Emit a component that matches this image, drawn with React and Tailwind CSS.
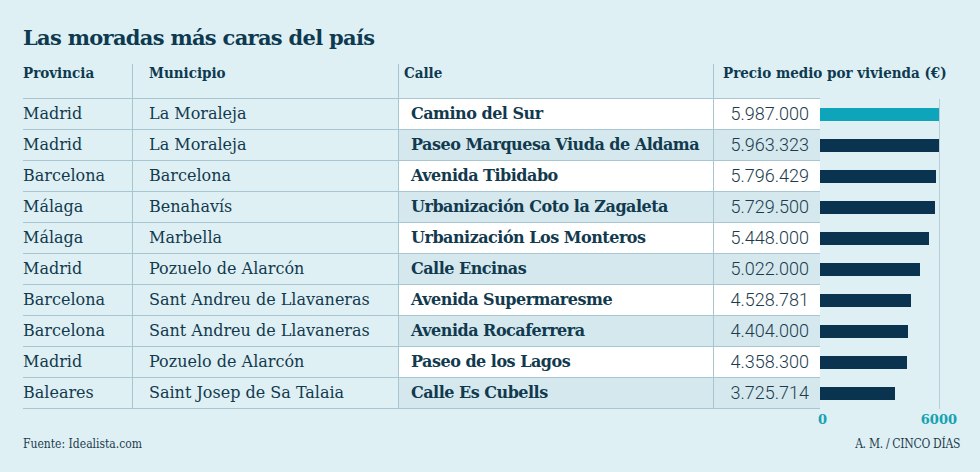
import React from 'react';

const rows = [
    ['Madrid', 'La Moraleja', 'Camino del Sur', '5.987.000', 5987],
    ['Madrid', 'La Moraleja', 'Paseo Marquesa Viuda de Aldama', '5.963.323', 5963],
    ['Barcelona', 'Barcelona', 'Avenida Tibidabo', '5.796.429', 5796],
    ['Málaga', 'Benahavís', 'Urbanización Coto la Zagaleta', '5.729.500', 5729],
    ['Málaga', 'Marbella', 'Urbanización Los Monteros', '5.448.000', 5448],
    ['Madrid', 'Pozuelo de Alarcón', 'Calle Encinas', '5.022.000', 5022],
    ['Barcelona', 'Sant Andreu de Llavaneras', 'Avenida Supermaresme', '4.528.781', 4528],
    ['Barcelona', 'Sant Andreu de Llavaneras', 'Avenida Rocaferrera', '4.404.000', 4404],
    ['Madrid', 'Pozuelo de Alarcón', 'Paseo de los Lagos', '4.358.300', 4358],
    ['Baleares', 'Saint Josep de Sa Talaia', 'Calle Es Cubells', '3.725.714', 3725],
];

const App = () => {
    return (
        <div className="w-[980px] h-[472px] bg-[#dff0f4] pl-[23px] pt-[25px] font-['DejaVu_Serif',serif] text-[#123a4e] overflow-hidden">
            <h1 className="text-[21px] leading-[26px] font-bold text-[#0d3a50] tracking-[-0.7px]">Las moradas más caras del país</h1>

            {/* Header */}
            <div className="flex mt-[13px]">
                <div className="flex w-[797px] h-[35px] border-b border-[#a8c6d1] text-[15px] leading-[18px] font-bold text-[#0d3a50] font-stretch-condensed">
                    <div className="w-[109px] shrink-0">Provincia</div>
                    <div className="w-[266px] shrink-0 border-l border-[#a8c6d1] pl-[16px]">Municipio</div>
                    <div className="w-[315px] shrink-0 border-l border-[#a8c6d1] pl-[5px]">Calle</div>
                    <div className="w-[107px] shrink-0 border-l border-[#a8c6d1] pl-[9px] whitespace-nowrap">Precio medio por vivienda (€)</div>
                </div>
            </div>

            {/* Rows */}
            {rows.map(([prov, mun, calle, precio, val], i) => (
                <div key={i} className="flex h-[31px]">
                    <div className="flex w-[797px] shrink-0 border-b border-[#a8c6d1] text-[16px] leading-[30px]">
                        <div className="w-[109px] shrink-0 whitespace-nowrap">{prov}</div>
                        <div className="w-[266px] shrink-0 border-l border-[#a8c6d1] pl-[16px] whitespace-nowrap">{mun}</div>
                        <div className={`w-[315px] shrink-0 border-l border-[#a8c6d1] pl-[12px] font-bold whitespace-nowrap tracking-[-0.5px] ${i % 2 === 0 ? 'bg-white' : 'bg-[#d4e8ee]'}`}>{calle}</div>
                        <div className={`w-[107px] shrink-0 border-l border-[#a8c6d1] pr-[11px] text-right font-['Roboto',sans-serif] font-light text-[18px] text-[#1c3c4e] ${i % 2 === 0 ? 'bg-white' : 'bg-[#d4e8ee]'}`}>{precio}</div>
                    </div>
                    <div className="w-[120px] shrink-0 border-r border-[#b5cfd8] flex items-center">
                        <div
                            className={`h-[13px] ${i === 0 ? 'bg-[#0ea4b9]' : 'bg-[#0a3350]'}`}
                            style={{ width: `${(val / 6000) * 120}px` }}
                        />
                    </div>
                </div>
            ))}

            {/* Axis */}
            <div className="flex ml-[795px] w-[139px] justify-between text-[13px] leading-[18px] font-bold text-[#17a2b2] mt-[2px]">
                <span>0</span>
                <span>6000</span>
            </div>

            {/* Footer */}
            <div className="flex justify-between items-center pr-[20px] mt-[7px] text-[12px] leading-[16px] text-[#1d3c4e] font-stretch-condensed">
                <span>Fuente: Idealista.com</span>
                <span className="tracking-[-0.3px]">A. M. / CINCO DÍAS</span>
            </div>
        </div>
    );
};

export default App;
